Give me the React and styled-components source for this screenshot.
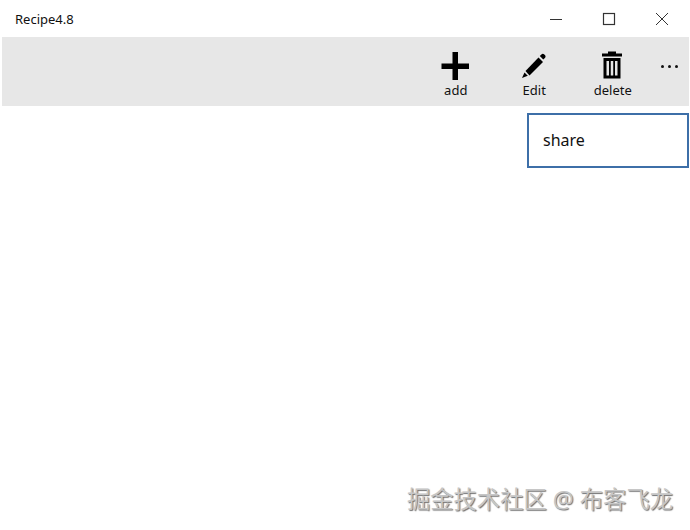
import React from 'react'
import styled, { createGlobalStyle } from 'styled-components'

const GlobalStyle = createGlobalStyle`
  html, body { margin: 0; padding: 0; background: #fff; }
  body { font-family: "Noto Sans", "Open Sans", sans-serif; color: #111; }
`

const App = () => {
  return (
    <Page>
      <GlobalStyle />
      <TitleBar>
        <Title>Recipe4.8</Title>
        <WindowButtons>
          <WindowButton>
            <svg width="14" height="14" viewBox="0 0 14 14"><path d="M1 7.5h12" stroke="#333" strokeWidth="1" /></svg>
          </WindowButton>
          <WindowButton>
            <svg width="14" height="14" viewBox="0 0 14 14"><rect x="1.5" y="1.5" width="11" height="11" fill="none" stroke="#333" strokeWidth="1.2" /></svg>
          </WindowButton>
          <WindowButton>
            <svg width="14" height="14" viewBox="0 0 14 14"><path d="M1 1l12 12M13 1L1 13" stroke="#333" strokeWidth="1" /></svg>
          </WindowButton>
        </WindowButtons>
      </TitleBar>
      <CommandBar>
        <CommandButton>
          <svg width="30" height="30" viewBox="0 0 30 30"><path d="M12.500 1h5.500v11.500h11v5.500H18v11h-5.500V18H1.500v-5.500h11z" fill="#000" /></svg>
          <span>add</span>
        </CommandButton>
        <CommandButton>
          <svg width="30" height="30" viewBox="0 0 30 30">
            <path d="M7.500 20L20.500 6.500l4.500 4.500L11.500 24.500z" fill="#000" />
            <path d="M21.800 5l1.600-1.600c.9-.9 2-.9 2.900 0l.6.6c.9.9.9 2 0 2.900L25.300 8.500z" fill="#000" />
            <path d="M6.500 21.500l-2.500 5.500 5.800-2.200z" fill="#000" />
          </svg>
          <span>Edit</span>
        </CommandButton>
        <CommandButton>
          <svg width="30" height="30" viewBox="0 0 30 30">
            <path d="M11 2.500V0.500h8v2h6v3H5v-3z" fill="#000" />
            <path fillRule="evenodd" d="M6.500 7h17v20.500h-17zM9.500 10v14.500h2.500V10zM13.750 10v14.500h2.500V10zM18 10v14.500h2.500V10z" fill="#000" />
          </svg>
          <span>delete</span>
        </CommandButton>
        <MoreButton>
          <Dot /><Dot /><Dot />
        </MoreButton>
      </CommandBar>
      <Flyout>
        <FlyoutItem>share</FlyoutItem>
      </Flyout>
      <Watermark>掘金技术社区 @ 布客飞龙</Watermark>
    </Page>
  )
}

export default App

const Page = styled.div`
  position: relative;
  width: 690px;
  height: 530px;
  overflow: hidden;
  background: #fff;
`
const TitleBar = styled.div`
  display: flex;
  align-items: center;
  justify-content: space-between;
  height: 37px;
  padding-left: 15px;
`
const Title = styled.div`
  font-size: 13px;
  color: #111;
`
const WindowButtons = styled.div`
  display: flex;
  margin-right: 2px;
`
const WindowButton = styled.div`
  display: flex;
  align-items: center;
  justify-content: center;
  width: 53px;
  height: 37px;
`
const CommandBar = styled.div`
  display: flex;
  justify-content: flex-end;
  height: 69px;
  margin: 0 1px 0 2px;
  background: #e7e7e7;
`
const CommandButton = styled.div`
  display: flex;
  flex-direction: column;
  align-items: center;
  width: 78.500px;
  padding-top: 14px;
  box-sizing: border-box;
  font-size: 13px;
  line-height: 16px;
  color: #111;
  span { margin: 1px 0 0 2px; }
`
const MoreButton = styled.div`
  display: flex;
  justify-content: center;
  gap: 4px;
  width: 38px;
  padding: 28px 2px 0 0;
  box-sizing: border-box;
`
const Dot = styled.i`
  width: 3px;
  height: 3px;
  border-radius: 50%;
  background: #111;
`
const Flyout = styled.div`
  width: 162px;
  height: 55px;
  margin: 7px 1px 0 auto;
  padding-bottom: 2px;
  box-sizing: border-box;
  border: 2px solid #3d6fa8;
  background: #fff;
  display: flex;
  align-items: center;
`
const FlyoutItem = styled.div`
  padding-left: 14px;
  font-size: 16px;
  color: #111;
`
const Watermark = styled.div`
  position: absolute;
  right: 17px;
  bottom: 16px;
  font-family: "Noto Sans", "Noto Sans CJK SC", sans-serif;
  font-size: 23.300px;
  line-height: 30px;
  color: #c6c6c6;
  text-shadow: 1px 1px 1px #707070;
  white-space: nowrap;
`
